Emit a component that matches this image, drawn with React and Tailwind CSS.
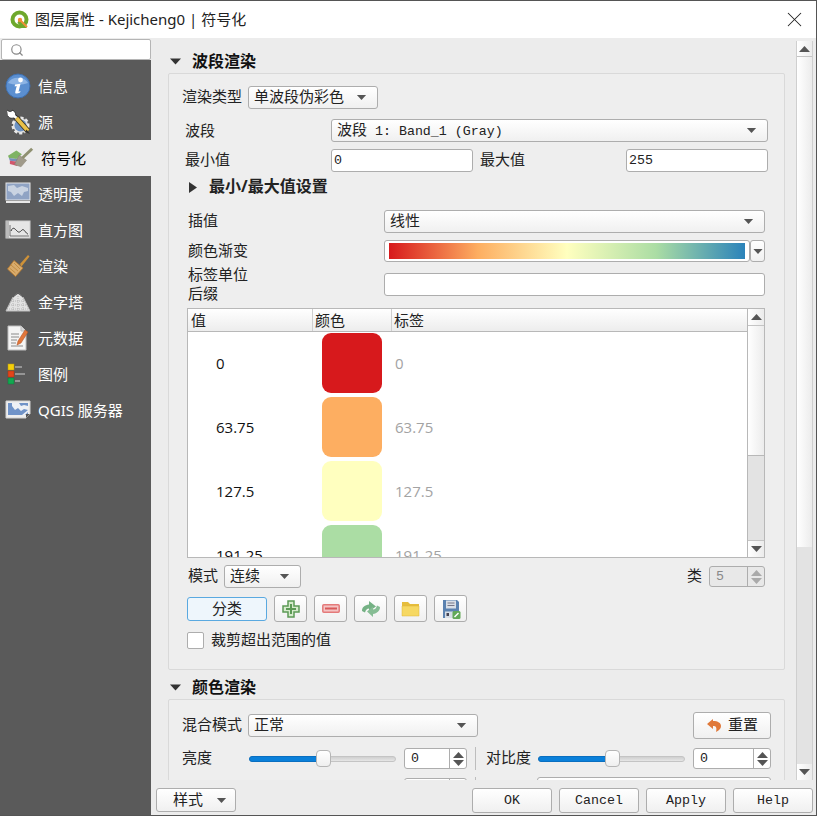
import { Search, X } from "lucide-react";

const mono = "font-['Liberation_Mono','Noto_Sans_CJK_SC',monospace]";

function Tri({ dir = "down", className = "" }) {
  const pts = { down: "0,0 11,0 5.5,6", up: "0,6 11,6 5.5,0", right: "0,0 8,5.5 0,11" }[dir];
  const size = dir === "right" ? [8, 11] : [11, 6];
  return (
    <svg width={size[0]} height={size[1]} viewBox={`0 0 ${size[0]} ${size[1]}`} className={`shrink-0 ${className}`}>
      <polygon points={pts} fill="currentColor" />
    </svg>
  );
}

function Label({ className = "", children }) {
  return <span className={`shrink-0 whitespace-nowrap pb-[2px] leading-[19px] ${className}`}>{children}</span>;
}

function Combo({ className = "", children, textClass = "pb-[2px]" }) {
  return (
    <div className={`flex h-[23px] items-center justify-between rounded-[3px] border border-[#adadad] bg-gradient-to-b from-white to-[#f0f0f0] pl-[5px] pr-[10px] text-[#222] ${className}`}>
      <span className={`whitespace-nowrap leading-[19px] ${textClass}`}>{children}</span>
      <Tri className="h-[5px] w-[11px] text-[#555]" />
    </div>
  );
}

function Field({ className = "", children }) {
  return (
    <div className={`flex h-[23px] items-center rounded-[3px] border border-[#adadad] bg-white pl-[2px] pt-[1px] text-[#222] ${mono} text-[13.3px] ${className}`}>
      {children}
    </div>
  );
}

function Spin({ className = "", value, disabled }) {
  return (
    <div className={`flex h-[21px] items-stretch rounded-[3px] border border-[#adadad] ${disabled ? "bg-[#e8e8e8] text-[#888]" : "bg-white text-[#222]"} ${className}`}>
      <span className={`flex flex-1 items-center pl-[6px] pt-[1px] ${mono} text-[13.3px]`}>{value}</span>
      <div className={`flex w-[17px] flex-col items-center justify-center gap-[2px] border-l border-[#adadad] ${disabled ? "text-[#aaa]" : "text-[#555]"}`}>
        <Tri dir="up" className="h-[6px] w-[11px]" />
        <Tri className="h-[6px] w-[11px]" />
      </div>
    </div>
  );
}

function Btn({ className = "", children }) {
  return (
    <div className={`flex h-[25px] items-center justify-center rounded-[3px] border border-[#adadad] bg-gradient-to-b from-white to-[#f0f0f0] text-[#222] ${className}`}>
      {children}
    </div>
  );
}

function Slider({ className = "" }) {
  return (
    <div className={`relative flex h-[20px] w-[147px] shrink-0 items-center ${className}`}>
      <div className="h-[6px] w-full rounded-[3px] border border-[#c4c4c4] bg-gradient-to-b from-[#cfcfcf] to-[#e6e6e6]" />
      <div className="absolute left-0 h-[6px] w-[70px] rounded-l-[3px] border border-[#0a6fc0] bg-[#0a80da]" />
      <div className="absolute left-[67px] h-[17px] w-[15px] rounded-[4px] border border-[#b5b5b5] bg-gradient-to-b from-white to-[#efefef]" />
    </div>
  );
}

function TableScroll({ className = "" }) {
  return (
    <div className={`flex w-[17px] shrink-0 flex-col border-l border-[#b8b8b8] ${className}`}>
      <div className="flex h-[17px] items-center justify-center border-b border-[#c4c4c4] bg-gradient-to-r from-white to-[#ececec] text-[#555]">
        <Tri dir="up" className="h-[6px] w-[11px]" />
      </div>
      <div className="h-[129px] bg-gradient-to-r from-white to-[#ececec]" />
      <div className="flex-1 border-t border-[#b8b8b8] bg-[#e3e3e3]" />
      <div className="flex h-[17px] items-center justify-center border-t border-[#c4c4c4] bg-gradient-to-r from-white to-[#ececec] text-[#555]">
        <Tri className="h-[6px] w-[11px]" />
      </div>
    </div>
  );
}

const IconInfo = () => (
  <svg width="26" height="26" viewBox="0 0 26 26">
    <circle cx="13" cy="13" r="12" fill="#5b8fd0" stroke="#3f6fae" />
    <path d="M3 10a11 9 0 0 1 20 0a14 6 0 0 1 -20 0" fill="#8db4e4" />
    <circle cx="15.5" cy="7" r="2.4" fill="#fff" />
    <path d="M10 11.5l5.5-.8-2 8 2-.8-.4 1.6c-2.600 1.500-5.500 1.700-4.800-.8l1.400-5.600-2 .3z" fill="#fff" />
  </svg>
);

const IconSource = () => (
  <svg width="26" height="26" viewBox="0 0 26 26">
    <path d="M14 11L8.500 6.500" stroke="#222" strokeWidth="4.500" />
    <path d="M2 1c3 2.500 5 1.500 5 .2 3 .8 4.500 3.500 3 6.800-2 2-6 1.500-7-1" fill="#fff" stroke="#222" strokeWidth=".8" />
    <path d="M14 11L8.500 6.500" stroke="#fff" strokeWidth="2.800" />
    <circle cx="15.500" cy="16.500" r="7.500" fill="#dcdcdc" stroke="#e8e8e8" strokeWidth="3" strokeDasharray="3 2" />
    <circle cx="15.500" cy="16.500" r="6" fill="#6d93c4" />
    <path d="M11.500 9L23 22" stroke="#3a3320" strokeWidth="5.500" />
    <path d="M11.500 9L23 22" stroke="#eac24a" strokeWidth="3.800" />
    <path d="M21.500 20.500l3.500 4.500-5-2z" fill="#333" />
  </svg>
);

const IconSymbology = () => (
  <svg width="28" height="24" viewBox="0 0 28 24">
    <path d="M0 9.500L9 4l6 4-6 5-8-1z" fill="#7fb364" />
    <path d="M1 12l8 1 5-3-3 6-9-1z" fill="#7790bb" />
    <path d="M2 15l9 1-1 4.500-8-2z" fill="#d2566c" />
    <path d="M12 9l8 5.500-6 7-7-2.500z" fill="#a09a8a" stroke="#80796b" strokeWidth=".5" />
    <path d="M15.500 12L26 2" stroke="#8f9071" strokeWidth="3.200" />
  </svg>
);

const IconTransparency = () => (
  <svg width="26" height="24" viewBox="0 0 26 24">
    <rect x="1" y="1" width="24" height="17" fill="#8fa3c4" stroke="#e6e6e6" />
    <path d="M3 4l6-1 3 3 5-2 6 2v3l-4 1-2 4-4-3-4 3-3-4-3-1z" fill="#c9d3e2" />
    <rect x="1" y="19" width="24" height="2" fill="#e8e8e8" />
    <path d="M2 17.500h22" stroke="#b8c4d8" strokeDasharray="2 1" />
  </svg>
);

const IconHistogram = () => (
  <svg width="26" height="20" viewBox="0 0 26 20">
    <rect x="1" y="1" width="24" height="17" fill="#e6e6e6" stroke="#cfcfcf" />
    <rect x="1" y="1" width="3" height="17" fill="#bcbcbc" />
    <path d="M5 5v11h19" fill="none" stroke="#555" strokeWidth=".8" />
    <path d="M6 11c2-5 4-2 6 0s3 1 5-1 4 4 6 4" fill="none" stroke="#333" strokeWidth="1" />
  </svg>
);

const IconRender = () => (
  <svg width="24" height="24" viewBox="0 0 24 24">
    <path d="M14 10l8-9 1.500 1.500-8 10z" fill="#cf9238" />
    <path d="M8 6.500l9 7.500-7.500 8.500-8-7.500z" fill="#d8ab6d" stroke="#b8782a" strokeWidth=".8" />
    <path d="M5 11l7 6M8 9l6 6M3.500 14l6 5" stroke="#b8812f" strokeWidth=".7" />
  </svg>
);

const IconPyramid = () => (
  <svg width="26" height="20" viewBox="0 0 26 20">
    <path d="M1 19l7-14 5-4 5 4 7 14z" fill="#e2e2e2" stroke="#bdbdbd" />
    <path d="M6 9h14M4 13h18M8 5v14M13 2v17M18 5v14M2 17h22" stroke="#9a9a9a" strokeWidth=".6" strokeDasharray="1 1" />
    <path d="M8 5l5-4 5 4" fill="none" stroke="#333" strokeWidth=".8" />
  </svg>
);

const IconMetadata = () => (
  <svg width="24" height="26" viewBox="0 0 24 26">
    <path d="M2 1h13l5 5v19H2z" fill="#f4f4f4" stroke="#bdbdbd" />
    <path d="M15 1v5h5" fill="#d8d8d8" stroke="#bdbdbd" />
    <path d="M5 9h8M5 12h8M5 15h6M5 18h5M5 21h12" stroke="#8a8a8a" />
    <path d="M19 5l3 2-7 11-4 2 1-4z" fill="#e2763a" stroke="#a84c1e" strokeWidth=".5" />
  </svg>
);

const IconLegend = () => (
  <svg width="22" height="22" viewBox="0 0 22 22">
    <rect x="1" y="1" width="6" height="6" fill="#f5cf0a" stroke="#b89a10" strokeWidth=".5" />
    <rect x="1" y="8" width="6" height="6" fill="#e2441a" stroke="#a83010" strokeWidth=".5" />
    <rect x="1" y="15" width="6" height="6" fill="#12a850" stroke="#0c7a3a" strokeWidth=".5" />
    <path d="M8 4h7M8 11h10M8 18h5" stroke="#a9a9a9" strokeWidth="1.500" />
  </svg>
);

const IconServer = () => (
  <svg width="26" height="20" viewBox="0 0 26 20">
    <path d="M1 1h24v13l-4 4H1z" fill="#eeeeee" stroke="#d2d2d2" />
    <rect x="3" y="3" width="20" height="12" fill="#7093c8" />
    <path d="M7 3h7l2 3 3-1 4 1v4l-4-1-3 2-3-3-3 2-3-4z" fill="#eef1f6" />
    <path d="M17 15l6-5v2l-3 3z" fill="#eef1f6" />
    <path d="M21 18v-4h4z" fill="#555" />
  </svg>
);

const IconLogo = () => (
  <svg width="20" height="20" viewBox="0 0 20 20">
    <circle cx="9.500" cy="9.500" r="7" fill="none" stroke="#6ea82c" strokeWidth="4" />
    <path d="M9 9l8 9h-4.500l-5-5z" fill="#6ea82c" />
    <circle cx="10" cy="10" r="2.200" fill="#ef8f37" />
    <path d="M11 11l6 6" stroke="#ef8f37" strokeWidth="2" />
  </svg>
);

const navItems = [
  { label: "信息", icon: <IconInfo /> },
  { label: "源", icon: <IconSource /> },
  { label: "符号化", icon: <IconSymbology />, active: true },
  { label: "透明度", icon: <IconTransparency /> },
  { label: "直方图", icon: <IconHistogram /> },
  { label: "渲染", icon: <IconRender /> },
  { label: "金字塔", icon: <IconPyramid /> },
  { label: "元数据", icon: <IconMetadata /> },
  { label: "图例", icon: <IconLegend /> },
  { label: "QGIS 服务器", icon: <IconServer /> },
];

const classes = [
  { value: "0", color: "bg-[#d7191c]" },
  { value: "63.75", color: "bg-[#fdae61]" },
  { value: "127.5", color: "bg-[#ffffbf]" },
  { value: "191.25", color: "bg-[#abdda4]" },
];

function Sidebar() {
  return (
    <div className="flex w-[151px] shrink-0 flex-col bg-[#5a5a5a]">
      <div className="bg-[#ececec] pb-0 pl-[1px] pt-[1px]">
        <div className="flex h-[21px] items-center rounded-[2px] border border-[#b5b5b5] bg-white pl-[8px]">
          <Search size={14} className="text-[#888]" />
        </div>
      </div>
      <div className="flex flex-col pt-[8px]">
        {navItems.map((item) => (
          <div
            key={item.label}
            className={`flex h-[36px] items-center whitespace-nowrap text-[15px] ${item.active ? "bg-[#ececec] pl-[8px] text-black" : "pl-[5px] text-white"}`}
          >
            <span className="flex w-[26px] shrink-0 items-center justify-center">{item.icon}</span>
            <span className="ml-[7px]">{item.label}</span>
          </div>
        ))}
      </div>
    </div>
  );
}

function ToolBtn({ className = "", children }) {
  return (
    <div className={`flex h-[27px] w-[33px] items-center justify-center rounded-[3px] border border-[#adadad] bg-gradient-to-b from-white to-[#f0f0f0] ${className}`}>
      {children}
    </div>
  );
}

function BandSection() {
  return (
    <div className="h-[597px] w-[617px] rounded-[2px] border border-[#d9d9d9] bg-[#eeeeee] text-[15px] text-[#222]">
      <div className="mt-[12px] flex items-center pl-[13px]">
        <Label className="w-[66px]">渲染类型</Label>
        <Combo className="w-[130px]">单波段伪彩色</Combo>
      </div>
      <div className="mt-[10px] flex items-center pl-[16px]">
        <span className="w-[146px] shrink-0 leading-[19px]">波段</span>
        <Combo className="w-[437px]" textClass="">
          波段<span className={`${mono} text-[13.3px]`}> 1: Band_1 (Gray)</span>
        </Combo>
      </div>
      <div className="mt-[7px] flex items-center pl-[16px]">
        <Label className="w-[146px]">最小值</Label>
        <Field className="w-[142px]">0</Field>
        <Label className="ml-[7px] w-[146px]">最大值</Label>
        <Field className="w-[142px]">255</Field>
      </div>
      <div className="mt-[6px] flex h-[19px] items-center pl-[20px] text-[16px] font-bold">
        <Tri dir="right" className="h-[11px] w-[8px] text-[#333]" />
        <span className="ml-[12px] pb-[2px] leading-[17px]">最小/最大值设置</span>
      </div>
      <div className="mt-[13px] flex items-center pl-[19px]">
        <Label className="w-[196px]">插值</Label>
        <Combo className="w-[381px]">线性</Combo>
      </div>
      <div className="mt-[7px] flex h-[22px] items-center pl-[19px]">
        <Label className="w-[196px]">颜色渐变</Label>
        <div className="flex h-[22px] w-[366px] items-center rounded-[3px] border border-[#adadad] bg-white px-[4px]">
          <div className="h-[16px] w-full bg-[linear-gradient(90deg,#d7191c,#fdae61,#ffffbf,#abdda4,#2b83ba)]" />
        </div>
        <div className="flex h-[22px] w-[15px] items-center justify-center rounded-[3px] border border-[#adadad] bg-gradient-to-b from-white to-[#f0f0f0] text-[#555]">
          <Tri className="h-[5px] w-[10px]" />
        </div>
      </div>
      <div className="mt-[11px] flex h-[23px] items-center pl-[19px]">
        <div className="flex h-[23px] w-[196px] flex-col justify-center pb-[2px] leading-[19px]">
          <span>标签单位</span>
          <span>后缀</span>
        </div>
        <Field className="w-[381px]" />
      </div>
      <div className="ml-[18px] mt-[12px] flex h-[250px] w-[578px] overflow-hidden border border-[#b8b8b8] bg-white">
        <div className="flex min-w-0 flex-1 flex-col">
          <div className="flex h-[23px] shrink-0 border-b border-[#b8b8b8] bg-gradient-to-b from-white to-[#ededed] text-[15px]">
            <span className="w-[125px] border-r border-[#cfcfcf] pl-[3px]">值</span>
            <span className="w-[79px] border-r border-[#cfcfcf] pl-[2px]">颜色</span>
            <span className="pl-[2px]">标签</span>
          </div>
          {classes.map((c) => (
            <div key={c.value} className="flex h-[64px] shrink-0 items-center font-['Open_Sans',sans-serif] text-[15px]">
              <span className="w-[134px] pb-[2px] pl-[28px] text-[#111]">{c.value}</span>
              <div className={`mb-[2px] h-[60px] w-[60px] rounded-[9px] ${c.color}`} />
              <span className="ml-[13px] pb-[2px] text-[#a3a3a3]">{c.value}</span>
            </div>
          ))}
        </div>
        <TableScroll />
      </div>
      <div className="ml-[19px] mt-[7px] flex w-[577px] items-center">
        <Label className="w-[36px]">模式</Label>
        <Combo className="w-[77px]">连续</Combo>
        <Label className="ml-auto mr-[7px]">类</Label>
        <Spin className="w-[56px]" value="5" disabled />
      </div>
      <div className="ml-[18px] mt-[7px] flex h-[27px] items-center">
        <div className="flex h-[24px] w-[80px] items-center justify-center rounded-[3px] border border-[#5aa9e0] bg-[#eef6fc]">分类</div>
        <ToolBtn className="ml-[7px]">
          <svg width="18" height="18" viewBox="0 0 18 18">
            <path d="M6 1h6v5h5v6h-5v5H6v-5H1V6h5z" fill="#d6ebcc" stroke="#5c9a55" strokeWidth="1.500" />
            <path d="M9 4v10M4 9h10" stroke="#5c9a55" strokeWidth="2" />
          </svg>
        </ToolBtn>
        <ToolBtn className="ml-[7px]">
          <svg width="18" height="9" viewBox="0 0 18 9">
            <rect x=".8" y=".8" width="16.400" height="7.400" rx="1" fill="#f4c4c4" stroke="#e47a7a" strokeWidth="1.500" />
            <rect x="3" y="3.500" width="12" height="2" fill="#d85a5a" />
          </svg>
        </ToolBtn>
        <ToolBtn className="ml-[7px]">
          <svg width="20" height="20" viewBox="0 0 20 20">
            <path d="M1 12c0-4 3-6 7-6.500V2l7 5.500-7 5V9.500c-2 0-3 1-4 4z" fill="#74b184" />
            <path d="M19 8c0 4-3 6.500-7 7v3l-6-5.500 6-5v3c2 0 3-1 4-4z" fill="#86bd94" />
          </svg>
        </ToolBtn>
        <ToolBtn className="ml-[7px]">
          <svg width="19" height="16" viewBox="0 0 19 16">
            <path d="M1 1h6l2 2h9v12H1z" fill="#e6bd3c" />
            <path d="M1 5h17v10H1z" fill="#f6d862" stroke="#dcb63a" strokeWidth=".5" />
          </svg>
        </ToolBtn>
        <ToolBtn className="ml-[7px]">
          <svg width="20" height="20" viewBox="0 0 20 20">
            <path d="M2 1h14l2 2v16H2z" fill="#5b82b0" />
            <rect x="5" y="1.500" width="10" height="8" fill="#d9dfe7" />
            <path d="M6.500 4h7M6.500 6.500h7" stroke="#778" />
            <rect x="4" y="12.500" width="8" height="6.500" fill="#d5dde6" />
            <rect x="5.500" y="14" width="2.500" height="3" fill="#445" />
            <rect x="11.500" y="12" width="8" height="8" rx="1.500" fill="#62a957" />
            <path d="M13.500 18l4-4" stroke="#fff" strokeWidth="1.500" />
          </svg>
        </ToolBtn>
      </div>
      <div className="ml-[18px] mt-[10px] flex h-[17px] items-center">
        <div className="h-[17px] w-[17px] rounded-[2px] border border-[#adadad] bg-white" />
        <Label className="ml-[7px]">裁剪超出范围的值</Label>
      </div>
    </div>
  );
}

function ColorSection() {
  return (
    <div className="h-[120px] w-[617px] rounded-[2px] border border-[#d9d9d9] bg-[#eeeeee] text-[15px] text-[#222]">
      <div className="mt-[12px] flex h-[27px] items-center pl-[13px]">
        <Label className="w-[66px]">混合模式</Label>
        <Combo className="w-[230px]">正常</Combo>
        <Btn className="ml-auto mr-[13px] h-[27px] w-[78px] gap-[6px]">
          <svg width="16" height="16" viewBox="0 0 16 16">
            <path d="M7 1L1 6l6 5V8c3 0 4 1 3 6 4-2 5-4 5-6 0-3-3-5-8-5z" fill="#e0793a" />
          </svg>
          <span className="pb-[2px] leading-[19px]">重置</span>
        </Btn>
      </div>
      <div className="mt-[8px] flex items-center pl-[13px]">
        <Label className="w-[67px]">亮度</Label>
        <Slider />
        <Spin className="ml-[8px] w-[63px]" value="0" />
        <div className="ml-[8px] h-[23px] w-px bg-[#bdbdbd]" />
        <Label className="ml-[10px] w-[52px]">对比度</Label>
        <Slider />
        <Spin className="ml-[8px] w-[78px]" value="0" />
      </div>
      <div className="mt-[7px] flex items-center pl-[13px]">
        <Label className="w-[67px]">饱和度</Label>
        <Slider />
        <Spin className="ml-[8px] w-[63px]" value="0" />
        <div className="ml-[8px] h-[23px] w-px bg-[#bdbdbd]" />
        <Label className="ml-[10px] w-[51px]">灰度</Label>
        <Combo className="w-[234px]">关闭</Combo>
      </div>
    </div>
  );
}

function SectionHead({ children, className = "" }) {
  return (
    <div className={`flex h-[18px] items-center pl-[19px] text-[16px] font-bold text-[#111] ${className}`}>
      <Tri className="h-[7px] w-[11px] text-[#333]" />
      <span className="ml-[11px]">{children}</span>
    </div>
  );
}

function MainScroll() {
  return (
    <div className="mr-[3px] mt-[3px] flex w-[17px] shrink-0 flex-col border-x border-[#cfcfcf]">
      <div className="flex h-[16px] items-center justify-center border-b border-[#c4c4c4] bg-gradient-to-r from-white to-[#ececec] text-[#555]">
        <Tri dir="up" className="h-[6px] w-[11px]" />
      </div>
      <div className="h-[490px] bg-gradient-to-r from-white to-[#ececec]" />
      <div className="flex-1 bg-[#e3e3e3]" />
      <div className="flex h-[16px] items-center justify-center bg-gradient-to-r from-white to-[#ececec] text-[#555]">
        <Tri className="h-[6px] w-[11px]" />
      </div>
    </div>
  );
}

export default function App() {
  return (
    <div className="flex h-[816px] w-[817px] flex-col overflow-hidden border-b border-r border-t border-[#555] bg-[#ececec] font-['Noto_Sans','Noto_Sans_CJK_SC',sans-serif]">
      <div className="flex h-[37px] shrink-0 items-center bg-white pl-[10px] pr-[9px] text-[15px] text-[#222]">
        <IconLogo />
        <span className="ml-[5px]">图层属性 - Kejicheng0 | 符号化</span>
        <X size={25} strokeWidth={1} className="ml-auto text-[#222]" />
      </div>
      <div className="flex min-h-0 flex-1">
        <Sidebar />
        <div className="flex min-w-0 flex-1 flex-col">
          <div className="flex h-[742px] shrink-0 overflow-hidden">
            <div className="min-w-0 flex-1 overflow-hidden pl-[17px] pt-[14px]">
              <SectionHead className="-ml-[17px]">波段渲染</SectionHead>
              <div className="mt-[3px]">
                <BandSection />
              </div>
              <SectionHead className="-ml-[17px] mt-[8px]">颜色渲染</SectionHead>
              <div className="mt-[3px]">
                <ColorSection />
              </div>
            </div>
            <MainScroll />
          </div>
          <div className="flex flex-1 items-start pl-[5px] pr-[3px] pt-[8px] text-[#222]">
            <div className="flex h-[24px] w-[80px] items-center justify-between rounded-[3px] border border-[#adadad] bg-gradient-to-b from-white to-[#f0f0f0] pl-[16px] pr-[8px] text-[15px]">
              <span className="pb-[2px] leading-[19px]">样式</span>
              <Tri className="h-[5px] w-[11px] text-[#555]" />
            </div>
            <div className={`ml-auto flex gap-[7px] text-[13.3px] ${mono}`}>
              {["OK", "Cancel", "Apply", "Help"].map((t) => (
                <Btn key={t} className="h-[24px] w-[80px]">{t}</Btn>
              ))}
            </div>
          </div>
        </div>
      </div>
    </div>
  );
}
